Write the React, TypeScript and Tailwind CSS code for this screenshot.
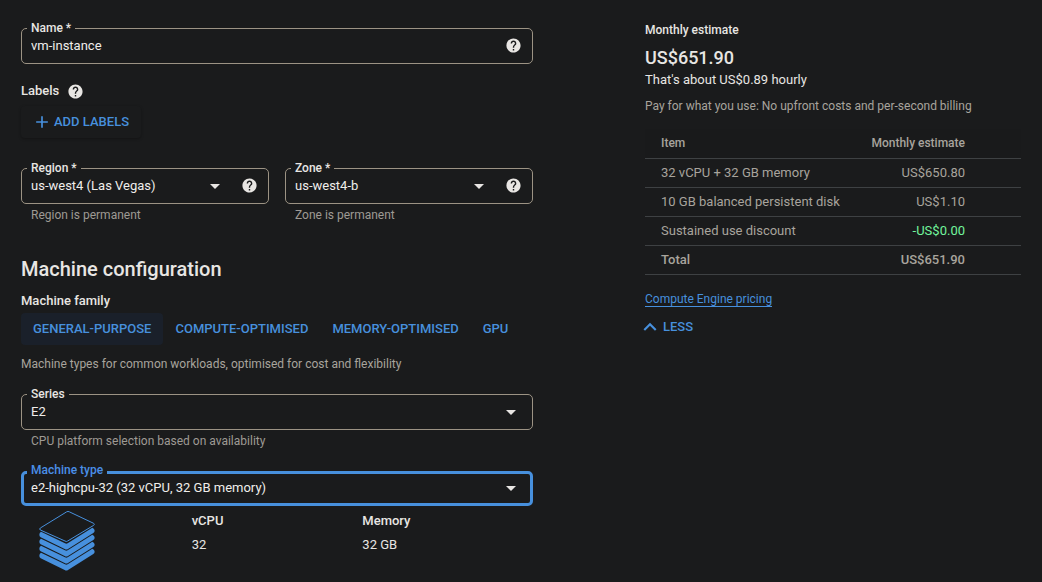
import type { ReactNode } from "react";
import { MdAdd, MdArrowDropDown, MdExpandLess, MdHelp } from "react-icons/md";

type FieldProps = {
  id: string;
  label: string;
  active?: boolean;
  help?: boolean;
  caption?: string;
  options?: string[];
  value?: string;
};

function HelpButton({ topic }: { topic: string }) {
  return (
    <button type="button" aria-label={`Help: ${topic}`} className="block shrink-0 text-[#e8e6e3]">
      <MdHelp className="size-[17px]" />
    </button>
  );
}

function Field({ id, label, active, help, caption, options, value }: FieldProps) {
  const frame = active
    ? "border-[3px] border-[#4790dd] pl-[3px] pr-2 pb-[6px]"
    : "border border-[#9c9384] pl-[5px] pr-[10px] pb-2";
  const legend = active ? "px-1 pb-1 text-[#4a8fe8]" : "px-1 text-[#e8e6e3]";
  const arrow = help ? "mr-[14px]" : "-mr-px";
  return (
    <div className="min-w-0">
      <fieldset className={`min-w-0 rounded-[5px] ${frame}`}>
        <legend className={`text-xs leading-[15px] font-medium ${legend}`}>
          <label htmlFor={id}>{label}</label>
        </legend>
        <div className={`flex h-[19px] items-center pl-1 ${active ? "-mt-1" : ""}`}>
          {options ? (
            <>
              <select
                id={id}
                className="h-[19px] min-w-0 grow appearance-none bg-transparent text-[13px] leading-[19px] text-[#f0eeeb] outline-none"
              >
                {options.map((o) => (
                  <option key={o}>{o}</option>
                ))}
              </select>
              <MdArrowDropDown className={`pointer-events-none size-6 shrink-0 text-[#e8e6e3] ${arrow}`} />
            </>
          ) : (
            <input
              id={id}
              defaultValue={value}
              className="h-[19px] min-w-0 grow bg-transparent text-[13px] leading-[19px] text-[#f0eeeb] outline-none"
            />
          )}
          {help && <HelpButton topic={label} />}
        </div>
      </fieldset>
      {caption && <p className="mt-[3px] pl-[10px] text-xs leading-4 text-[#9e9a94]">{caption}</p>}
    </div>
  );
}

function StackIcon() {
  return (
    <svg viewBox="27 15 168 186" className="h-[62px] w-14" aria-hidden="true">
      <path
        d="M110 20.5 Q114 18 118 20.5 L191 55 Q195 58 191 61 L113 108 Q109 111 105 108 L31 75 Q27 72 31 69 Z"
        fill="none"
        stroke="#4790dd"
        strokeWidth="3"
      />
      {[0, 21, 42, 63].map((dy) => (
        <path
          key={dy}
          transform={`translate(0 ${dy})`}
          d="M33 80 L105 115 Q109 117 113 115 L187 68 Q194 71 194 77 Q194 81 190 84 L114 132 Q109 135 104 132 L32 97 Q28 94 28 89 Q28 83 33 80 Z"
          fill="#4790dd"
        />
      ))}
    </svg>
  );
}

const families = ["General-purpose", "Compute-optimised", "Memory-optimised", "GPU"];

const costs = [
  { item: "32 vCPU + 32 GB memory", cost: "US$650.80" },
  { item: "10 GB balanced persistent disk", cost: "US$1.10" },
  { item: "Sustained use discount", cost: "-US$0.00", credit: true },
];

function Spec({ name, children }: { name: string; children: ReactNode }) {
  return (
    <dl className="pt-[5px] text-[13px] leading-5">
      <dt className="font-medium">{name}</dt>
      <dd className="mt-1">{children}</dd>
    </dl>
  );
}

function InstanceForm() {
  return (
    <form className="min-w-0">
      <Field id="name" label="Name *" value="vm-instance" help />

      <div className="mt-[17px] flex h-5 items-center gap-2">
        <h3 className="text-[13px] leading-5 font-medium">Labels</h3>
        <HelpButton topic="Labels" />
      </div>
      <button
        type="button"
        className="mt-[5px] flex h-8 items-center gap-[2px] rounded-sm pr-3 pl-[11px] text-[13px] font-medium text-[#4790dd] uppercase shadow-[0_1px_3px_rgba(0,0,0,0.3)]"
      >
        <MdAdd className="size-5" />
        Add labels
      </button>

      <div className="mt-[23px] grid grid-cols-2 gap-4">
        <Field id="region" label="Region *" options={["us-west4 (Las Vegas)"]} help caption="Region is permanent" />
        <Field id="zone" label="Zone *" options={["us-west4-b"]} help caption="Zone is permanent" />
      </div>

      <h2 className="mt-8 text-xl leading-7 font-medium">Machine configuration</h2>
      <h3 className="mt-2 text-[13px] leading-5 font-medium">Machine family</h3>
      <div role="tablist" className="mt-[2px] flex flex-wrap">
        {families.map((f, i) => (
          <button
            key={f}
            type="button"
            role="tab"
            aria-selected={i === 0}
            className={`h-8 rounded-sm px-3 text-[13px] font-medium text-[#4790dd] uppercase ${i === 0 ? "bg-[#1a202a]" : ""}`}
          >
            {f}
          </button>
        ))}
      </div>
      <p className="mt-[9px] mb-[13px] text-xs leading-5 text-[#a8a49d]">
        Machine types for common workloads, optimised for cost and flexibility
      </p>

      <Field id="series" label="Series" options={["E2"]} caption="CPU platform selection based on availability" />
      <div className="mt-[14px]">
        <Field id="type" label="Machine type" options={["e2-highcpu-32 (32 vCPU, 32 GB memory)"]} active />
      </div>

      <div className="grid grid-cols-3">
        <div className="pt-1 pl-[18px]">
          <StackIcon />
        </div>
        <Spec name="vCPU">32</Spec>
        <Spec name="Memory">32 GB</Spec>
      </div>
    </form>
  );
}

function Estimate() {
  return (
    <aside className="-mt-px min-w-0 text-[#a8a49d]">
      <h3 className="text-xs leading-5 font-medium text-[#e8e6e3]">Monthly estimate</h3>
      <p className="mt-[6px] text-lg leading-6 font-medium text-[#e8e6e3]">US$651.90</p>
      <p className="text-[13px] leading-5 text-[#e8e6e3]">That's about US$0.89 hourly</p>
      <p className="mt-[6px] text-xs leading-5">Pay for what you use: No upfront costs and per-second billing</p>

      <table className="mt-[13px] w-full border-collapse text-[13px] leading-5">
        <thead>
          <tr className="h-[29px] border-b border-[#3e4143] bg-[#191a1b] text-xs">
            <th scope="col" className="pl-4 text-left font-medium">Item</th>
            <th scope="col" className="pr-14 text-right font-medium">Monthly estimate</th>
          </tr>
        </thead>
        <tbody>
          {costs.map((c) => (
            <tr key={c.item} className="h-[29px] border-b border-[#3e4143]">
              <td className="pl-4">{c.item}</td>
              <td className={`pr-14 text-right ${c.credit ? "text-[#72f59d]" : ""}`}>{c.cost}</td>
            </tr>
          ))}
          <tr className="h-[29px] border-b border-[#3e4143] font-medium">
            <td className="pl-4">Total</td>
            <td className="pr-14 text-right">US$651.90</td>
          </tr>
        </tbody>
      </table>

      <p className="mt-[14px] text-xs leading-5">
        <a href="#pricing" className="border-b border-[#4790dd] text-[#4790dd]">
          Compute Engine pricing
        </a>
      </p>
      <button
        type="button"
        className="mt-2 -ml-2 flex h-5 items-center text-[13px] font-medium text-[#4790dd] uppercase"
      >
        <MdExpandLess className="size-[26px]" />
        Less
      </button>
    </aside>
  );
}

export default function App() {
  return (
    <main className="grid min-h-screen grid-cols-[512fr_376fr] items-start gap-28 bg-[#1a1b1c] px-[21px] pt-[21px] font-[Roboto,sans-serif] text-[#e8e6e3]">
      <InstanceForm />
      <Estimate />
    </main>
  );
}
